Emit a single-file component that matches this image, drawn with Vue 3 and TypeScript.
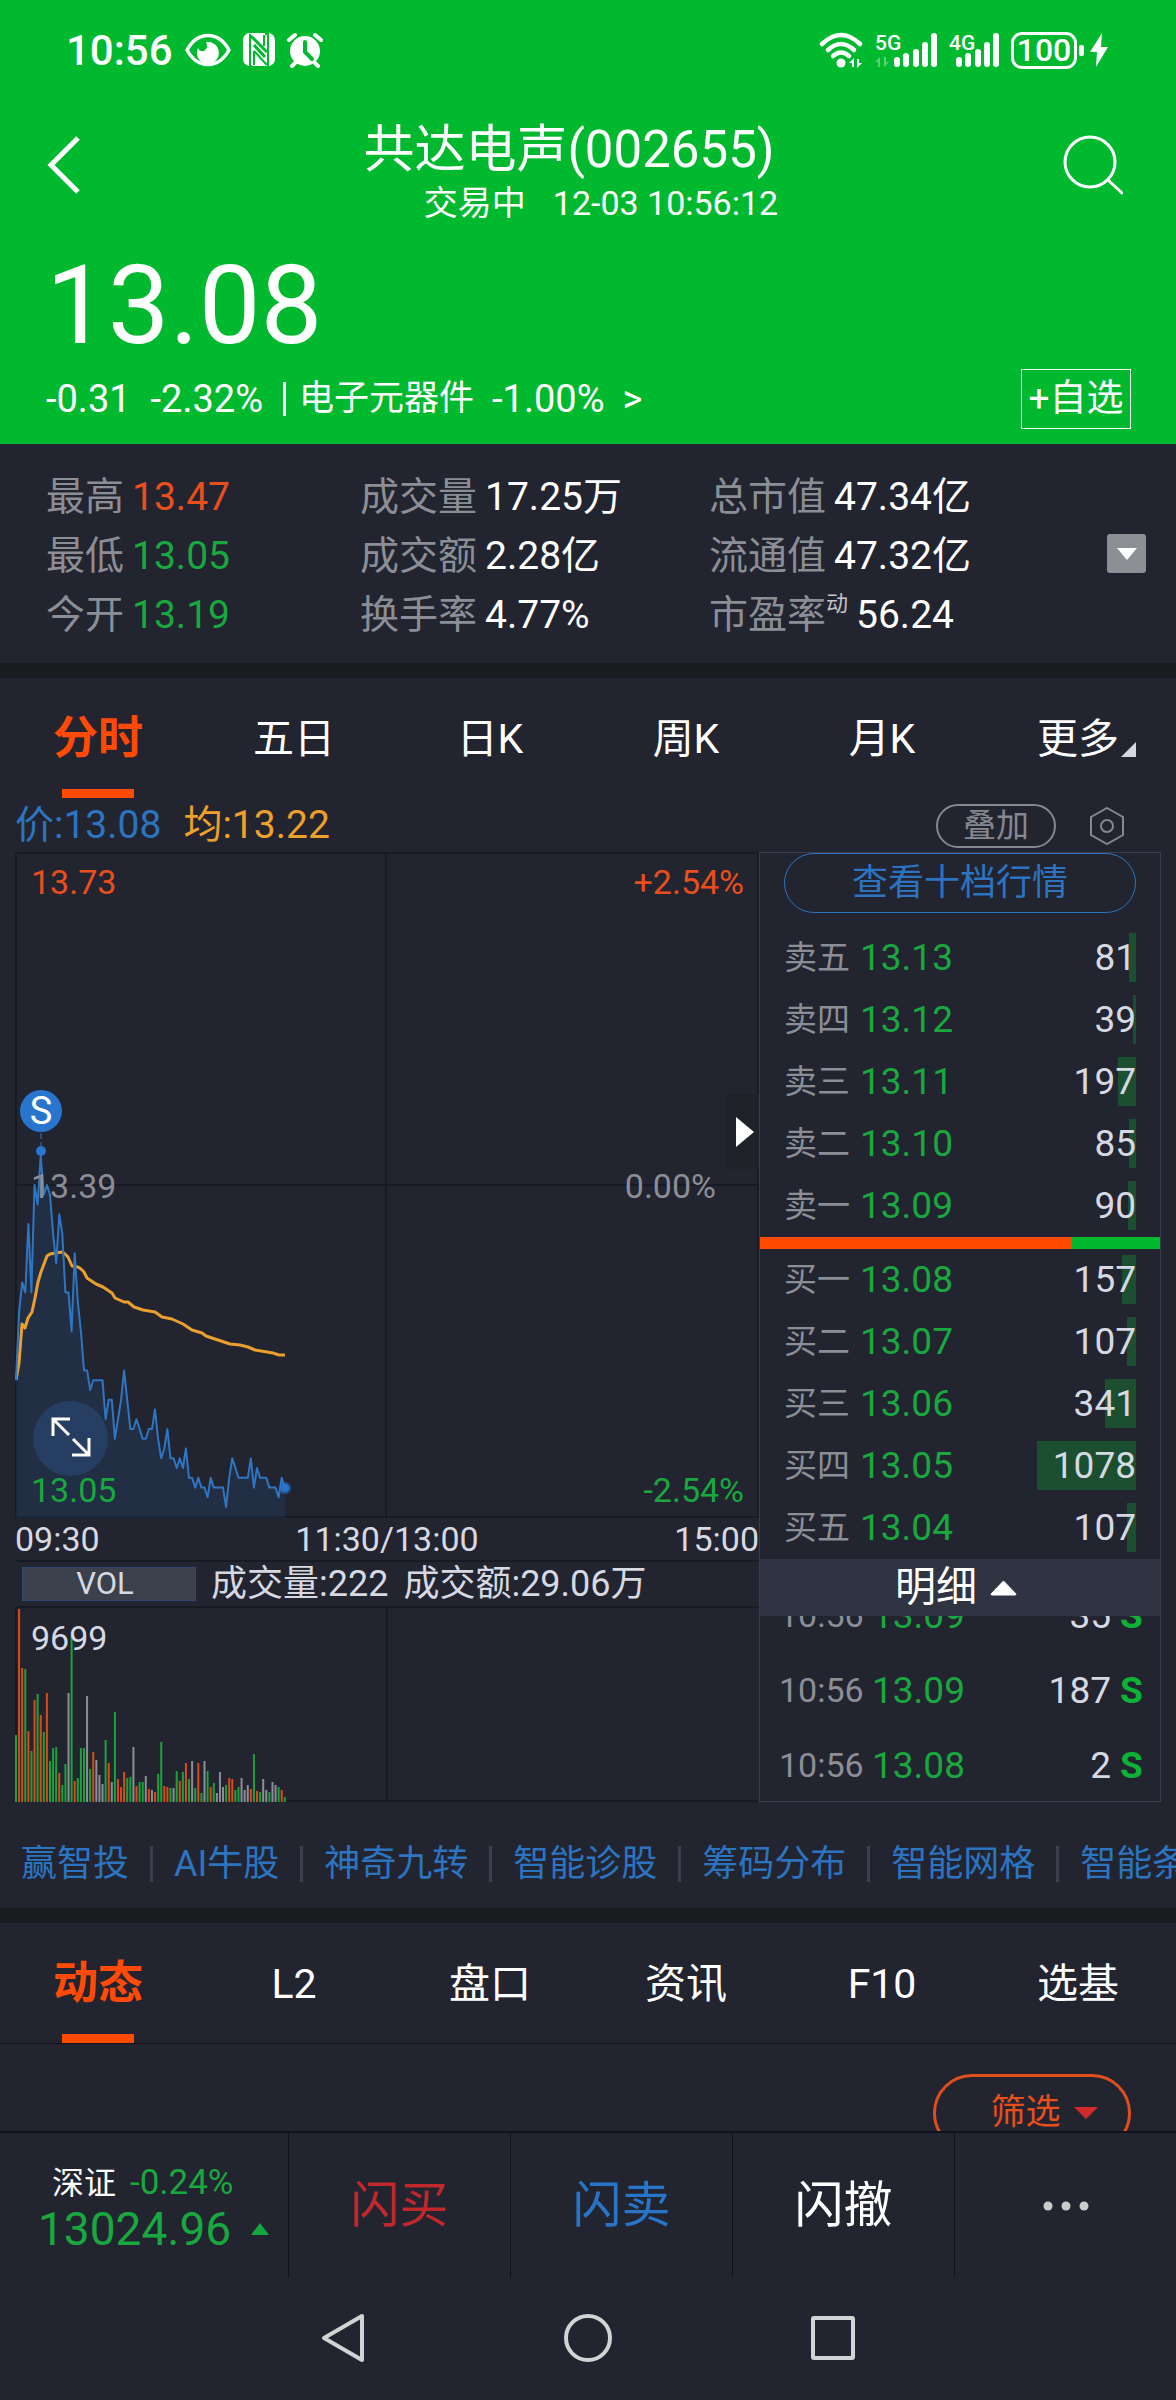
<script setup lang="ts">
import { computed, ref } from 'vue'

type Tone = 'up' | 'down' | 'flat' | 'plain'

interface Stat {
  label: string
  value: string
  tone: Tone
  mark?: string
}

interface Order {
  label: string
  price: string
  amount: number
  bar: number
}

const stats: Stat[] = [
  { label: '最高', value: '13.47', tone: 'up' },
  { label: '成交量', value: '17.25万', tone: 'plain' },
  { label: '总市值', value: '47.34亿', tone: 'plain' },
  { label: '最低', value: '13.05', tone: 'down' },
  { label: '成交额', value: '2.28亿', tone: 'plain' },
  { label: '流通值', value: '47.32亿', tone: 'plain' },
  { label: '今开', value: '13.19', tone: 'down' },
  { label: '换手率', value: '4.77%', tone: 'plain' },
  { label: '市盈率', value: '56.24', tone: 'plain', mark: '动' },
]

const periods = ['分时', '五日', '日K', '周K', '月K', '更多']
const period = ref('分时')

const sections = ['动态', 'L2', '盘口', '资讯', 'F10', '选基']
const section = ref('动态')

const tools = ['赢智投', 'AI牛股', '神奇九转', '智能诊股', '筹码分布', '智能网格', '智能条件单']

const asks: Order[] = [
  { label: '卖五', price: '13.13', amount: 81, bar: 7 },
  { label: '卖四', price: '13.12', amount: 39, bar: 3 },
  { label: '卖三', price: '13.11', amount: 197, bar: 18 },
  { label: '卖二', price: '13.10', amount: 85, bar: 7 },
  { label: '卖一', price: '13.09', amount: 90, bar: 8 },
]

const bids: Order[] = [
  { label: '买一', price: '13.08', amount: 157, bar: 14 },
  { label: '买二', price: '13.07', amount: 107, bar: 9 },
  { label: '买三', price: '13.06', amount: 341, bar: 31 },
  { label: '买四', price: '13.05', amount: 1078, bar: 99 },
  { label: '买五', price: '13.04', amount: 107, bar: 9 },
]

const trades = [
  { time: '10:56', price: '13.09', amount: 35, side: 'S' },
  { time: '10:56', price: '13.09', amount: 187, side: 'S' },
  { time: '10:56', price: '13.08', amount: 2, side: 'S' },
]

// Minute steps on the time axis, and ticks below yesterday's close for each minute.
const MINUTE = 3.09
const TICK = 9.76
const MIDDLE = 333
const ticks = [
  20, 13, 10, 11, 4, 11, 0, 2, -3, 1, 0, 1, 5, 8, 3, 5, 11, 11, 15, 7, 12, 15, 19, 19, 21, 20, 20, 20, 20,
  24, 22, 22, 26, 24, 22, 19, 22, 25, 25, 24, 25, 26, 26, 25, 25, 23, 26, 28, 27, 25, 28, 28, 29, 28, 29,
  27, 30, 30, 31, 30, 31, 31, 32, 30, 31, 31, 31, 31, 33, 30, 28, 29, 30, 30, 30, 30, 28, 31, 29, 30, 30,
  30, 31, 31, 31, 32, 30, 31,
]

const priceLine = computed(() =>
  ticks.map((t, i) => `${(1 + i * MINUTE).toFixed(1)},${(MIDDLE + t * TICK).toFixed(1)}`).join(' '),
)
const priceArea = computed(() => `1,666 ${priceLine.value} 270,666`)

const averageLine =
  '1,528 4,511 7,472 10,476 13,466 17,460 20,446 23,430 26,420 29,412 32,404 35,402 41,401 47,400 50,402 ' +
  '53,405 57,414 63,415 66,417 69,420 72,426 81,432 88,435 97,441 100,446 109,450 113,450 119,455 128,458 ' +
  '140,460 147,465 157,467 168,472 177,478 187,481 191,484 203,488 215,492 225,493 233,495 240,498 252,500 ' +
  '258,501 264,503 270,503'

const volumeData =
  'g67 r193 r134 g133 r71 g51 r102 g108 r87 g70 r109 g41 g54 g55 r29 g17 g38 w109 g166 r21 g24 g54 g54 w106 ' +
  'g33 r50 w42 w27 w18 g62 r39 w20 g90 r23 r15 r30 g24 g25 w55 r16 g20 g20 w26 r13 w12 r10 g28 g60 r16 r15 ' +
  'g14 w14 g31 r21 g30 r39 g23 w41 g14 r39 g9 w41 g31 r15 g19 w9 w30 w15 g17 r24 r23 g12 g15 w24 w12 w17 ' +
  'r13 g48 r11 g10 w23 w12 g10 w20 w17 g15 r12 g5'

const volumeColor: Record<string, string> = { g: '#18a33b', r: '#dc4a17', w: '#8b8e96' }
const volumes = volumeData.split(' ').map((entry, i) => ({
  x: i * MINUTE,
  height: Number(entry.slice(1)),
  color: volumeColor[entry[0]],
}))

const signalBars = [
  { x: 0, top: 24 },
  { x: 9, top: 20 },
  { x: 19, top: 16 },
  { x: 28, top: 9 },
  { x: 37, top: 0 },
]
</script>

<template>
  <div class="app">
    <header class="head">
      <div class="status">
        <div class="status-side">
          <span class="clock">10:56</span>
          <svg class="eye" width="46" height="34" viewBox="0 0 46 34" aria-hidden="true">
            <path d="M2 17Q10 2.500 23 2.500T44 17Q36 31.500 23 31.500T2 17Z" fill="none" stroke="#fff" stroke-width="3.500" stroke-linejoin="round" />
            <path d="M21 9A11 11 0 1 1 13 15Q15 19 19 18Q24 15 21 9Z" fill="#fff" />
          </svg>
          <svg width="32" height="34" viewBox="0 0 32 34" aria-hidden="true">
            <rect x="0" y="0" width="32" height="33" rx="7" fill="#fff" />
            <g fill="none" stroke="#00b92f" stroke-width="2">
              <path d="M7 1V33H9M25 33V1H22" />
              <path d="M8 3L24 19M11 12L22 24" stroke-width="3" />
              <path d="M11 18V32M11 18L24 32M21 2V13" />
            </g>
          </svg>
          <svg width="36" height="36" viewBox="0 0 36 36" aria-hidden="true">
            <circle cx="18" cy="19" r="15" fill="#fff" />
            <path d="M2 8L8 3M34 8L28 3M8 31L5 34M28 31L31 34" stroke="#fff" stroke-width="4" stroke-linecap="round" />
            <path d="M18 10V20L25 27" fill="none" stroke="#00b92f" stroke-width="4" stroke-linecap="round" />
          </svg>
        </div>
        <div class="status-side">
          <svg width="44" height="36" viewBox="0 0 44 36" aria-hidden="true">
            <g fill="none" stroke="#fff" stroke-width="4.500" stroke-linecap="round">
              <path d="M3 12Q22 -6 41 12" />
              <path d="M9 18Q22 6 35 18" />
              <path d="M14 24Q22 17 30 24" />
            </g>
            <circle cx="22" cy="31" r="4.500" fill="#fff" />
            <path d="M30 31L35 26V35H33V31ZM43 31L38 36V27H40V31Z" fill="#fff" />
          </svg>
          <svg width="62" height="36" viewBox="0 0 62 36" aria-label="5G">
            <text x="0" y="18" class="net">5G</text>
            <path d="M0 30L5 25V35H3V30ZM14 30L9 35V25H11V30Z" fill="#fff" opacity=".35" />
            <rect v-for="b in signalBars" :key="b.x" :x="b.x + 19" :y="b.top + 1" width="6" :height="34 - b.top" rx="3" fill="#fff" />
          </svg>
          <svg width="50" height="36" viewBox="0 0 50 36" aria-label="4G">
            <text x="0" y="18" class="net">4G</text>
            <rect v-for="b in signalBars" :key="b.x" :x="b.x + 7" :y="b.top + 1" width="6" :height="34 - b.top" rx="3" fill="#fff" />
          </svg>
          <div class="battery">
            <span class="cell">100</span>
            <span class="nub"></span>
            <svg width="18" height="34" viewBox="0 0 18 34" aria-hidden="true">
              <path d="M12 0L0 19H7L6 34L18 14H11Z" fill="#fff" />
            </svg>
          </div>
        </div>
      </div>

      <div class="title-row">
        <button class="icon-button" aria-label="返回">
          <svg width="34" height="58" viewBox="0 0 34 58">
            <path d="M31 2L4 29L31 56" fill="none" stroke="#fff" stroke-width="5" />
          </svg>
        </button>
        <div class="title">
          <h1>共达电声(002655)</h1>
          <p><span>交易中</span><span>12-03 10:56:12</span></p>
        </div>
        <button class="icon-button end" aria-label="搜索">
          <svg width="60" height="60" viewBox="0 0 60 60">
            <circle cx="27" cy="27" r="25" fill="none" stroke="#fff" stroke-width="3" />
            <path d="M45 45L59 58" stroke="#fff" stroke-width="3" stroke-linecap="round" />
          </svg>
        </button>
      </div>

      <div class="price">13.08</div>
      <div class="change">
        <span class="num">-0.31</span>
        <span class="num">-2.32%</span>
        <a href="#sector" class="sector"><i></i>电子元器件 <span class="num rate">-1.00%</span> <span class="num">&gt;</span></a>
        <button class="add">+自选</button>
      </div>
    </header>

    <section class="stats">
      <dl>
        <div v-for="s in stats" :key="s.label">
          <dt>{{ s.label }}<sup v-if="s.mark">{{ s.mark }}</sup></dt>
          <dd :class="s.tone">{{ s.value }}</dd>
        </div>
      </dl>
      <button class="expand" aria-label="展开">
        <svg width="20" height="12" viewBox="0 0 20 12"><path d="M0 0H20L10 12Z" fill="#fff" /></svg>
      </button>
    </section>

    <nav class="tabs">
      <button v-for="p in periods" :key="p" :class="{ active: p === period }" @click="period = p">
        <span>{{ p }}<svg v-if="p === '更多'" class="corner" width="15" height="15" viewBox="0 0 15 15"><path d="M15 0V15H0Z" fill="#d5d8df" /></svg></span>
      </button>
    </nav>

    <div class="legend">
      <span class="blue">价:13.08</span>
      <span class="amber">均:13.22</span>
      <button class="overlay">叠加</button>
      <button class="icon-button" aria-label="设置">
        <svg width="34" height="38" viewBox="0 0 34 38" fill="none" stroke="#85888f" stroke-width="2">
          <path d="M17 1L33 10V28L17 37L1 28V10Z" />
          <circle cx="17" cy="19" r="6" />
        </svg>
      </button>
    </div>

    <main class="board">
      <div class="charts">
        <div class="plot">
          <svg viewBox="0 0 744 666">
            <g stroke="#181a24" stroke-width="2" fill="none">
              <path d="M1 666V1H743V666" />
              <path d="M371 1V666M1 333H742M0 665H743" />
            </g>
            <polygon :points="priceArea" fill="#2775c8" fill-opacity=".13" />
            <polyline :points="averageLine" fill="none" stroke="#eba02d" stroke-width="3" stroke-linejoin="round" />
            <polyline :points="priceLine" fill="none" stroke="#2e76c2" stroke-width="2" stroke-linejoin="round" />
            <path d="M26 272V294" stroke="#2e76c2" stroke-dasharray="6 3" />
            <circle cx="26" cy="299" r="5" fill="#2775cc" />
            <circle cx="270" cy="636" r="6" fill="#2775cc" opacity=".55" />
            <circle cx="270" cy="636" r="4" fill="#2775cc" />
          </svg>
          <span class="mark top left up">13.73</span>
          <span class="mark top right up">+2.54%</span>
          <span class="mark middle left flat">13.39</span>
          <span class="mark middle right inner flat">0.00%</span>
          <span class="mark bottom left down">13.05</span>
          <span class="mark bottom right down">-2.54%</span>
          <span class="signal">S</span>
          <button class="zoom" aria-label="全屏">
            <svg width="40" height="40" viewBox="0 0 40 40" fill="none" stroke="#fff" stroke-width="3">
              <path d="M19 2H2V19M2 2L18 18M22 22L38 38M38 21V38H21" />
            </svg>
          </button>
          <button class="fold" aria-label="收起盘口">
            <svg width="18" height="30" viewBox="0 0 18 30"><path d="M0 0L18 15L0 30Z" fill="#fff" /></svg>
          </button>
        </div>
        <div class="hours"><span>09:30</span><span>11:30/13:00</span><span>15:00</span></div>
        <div class="vol-head">
          <button class="vol">VOL</button>
          <span>成交量:222</span>
          <span>成交额:29.06万</span>
        </div>
        <div class="plot">
          <svg viewBox="0 0 744 194">
            <path d="M1 0V193H743M372 0V193" stroke="#181a24" stroke-width="2" fill="none" />
            <rect v-for="v in volumes" :key="v.x" :x="v.x" :y="194 - v.height" width="2" :height="v.height" :fill="v.color" />
          </svg>
          <span class="mark volume">9699</span>
        </div>
      </div>

      <aside class="panel">
        <button class="depth">查看十档行情</button>
        <table class="orders">
          <tbody>
            <tr v-for="o in asks" :key="o.label">
              <th scope="row">{{ o.label }}</th>
              <td class="down">{{ o.price }}</td>
              <td class="amount"><i :style="{ width: o.bar + 'px' }"></i><span>{{ o.amount }}</span></td>
            </tr>
          </tbody>
        </table>
        <div class="balance"><i></i></div>
        <table class="orders">
          <tbody>
            <tr v-for="o in bids" :key="o.label">
              <th scope="row">{{ o.label }}</th>
              <td class="down">{{ o.price }}</td>
              <td class="amount"><i :style="{ width: o.bar + 'px' }"></i><span>{{ o.amount }}</span></td>
            </tr>
          </tbody>
        </table>
        <button class="detail">
          明细
          <svg width="27" height="16" viewBox="0 0 27 16"><path d="M13.500 1L26 14Q26 15 25 15H2Q1 15 1 14Z" fill="#fff" stroke="#fff" stroke-linejoin="round" /></svg>
        </button>
        <div class="trades">
          <table>
            <tbody>
              <tr v-for="(t, i) in trades" :key="i">
                <td class="time">{{ t.time }}</td>
                <td class="down">{{ t.price }}</td>
                <td class="amount">{{ t.amount }}</td>
                <td class="side">{{ t.side }}</td>
              </tr>
            </tbody>
          </table>
        </div>
      </aside>
    </main>

    <nav class="tools">
      <a v-for="t in tools" :key="t" href="#tool">{{ t }}</a>
    </nav>

    <nav class="tabs">
      <button v-for="s in sections" :key="s" :class="{ active: s === section }" @click="section = s">
        <span>{{ s }}</span>
      </button>
    </nav>

    <section class="feed">
      <button class="filter">
        筛选
        <svg width="24" height="12" viewBox="0 0 24 12"><path d="M0 0H24L12 12Z" fill="#d2292b" /></svg>
      </button>
    </section>

    <footer>
      <div class="actions">
        <a href="#index" class="index">
          <span class="index-name">深证 <b>-0.24%</b></span>
          <span class="index-value">13024.96<svg width="18" height="12" viewBox="0 0 18 12"><path d="M0 12L9 0L18 12Z" fill="#12a83c" /></svg></span>
        </a>
        <button class="buy">闪买</button>
        <button class="sell">闪卖</button>
        <button>闪撤</button>
        <button aria-label="更多操作">
          <svg width="46" height="10" viewBox="0 0 46 10" fill="#ccc"><circle cx="5" cy="5" r="4.500" /><circle cx="23" cy="5" r="4.500" /><circle cx="41" cy="5" r="4.500" /></svg>
        </button>
      </div>
      <div class="system">
        <button aria-label="后退">
          <svg width="48" height="50" viewBox="0 0 48 50"><path d="M43 3V47L5 25Z" fill="none" stroke="#d3d3d3" stroke-width="4" stroke-linejoin="round" /></svg>
        </button>
        <button aria-label="主页">
          <svg width="48" height="50" viewBox="0 0 48 50"><circle cx="24" cy="25" r="22" fill="none" stroke="#d3d3d3" stroke-width="4" /></svg>
        </button>
        <button aria-label="最近任务">
          <svg width="48" height="50" viewBox="0 0 48 50"><rect x="4" y="5" width="40" height="40" rx="1" fill="none" stroke="#d3d3d3" stroke-width="4" /></svg>
        </button>
      </div>
    </footer>
  </div>
</template>

<style>
body {
  margin: 0;
  background: #222430;
}
</style>

<style scoped>
.app {
  overflow: hidden;
  color: #fff;
  background: #222430;
  font-family: Roboto, "Noto Sans CJK SC", sans-serif;
  white-space: nowrap;
}
button {
  margin: 0;
  padding: 0;
  border: 0;
  background: none;
  color: inherit;
  font: inherit;
  cursor: pointer;
}
a {
  color: inherit;
  text-decoration: none;
}
svg {
  display: block;
}
table {
  width: 100%;
  border-collapse: collapse;
}
th,
td {
  padding: 0;
  font-weight: 400;
  text-align: left;
}
.up {
  color: #e94f1c;
}
.down {
  color: #18a83e;
}
.flat {
  color: #8b8e95;
}

/* Header */
.head {
  padding-bottom: 15px;
  background: #00b92f;
}
.status {
  display: flex;
  justify-content: space-between;
  align-items: center;
  height: 100px;
  padding: 0 68px 0 66px;
}
.status-side {
  display: flex;
  align-items: center;
  gap: 12px;
}
.clock {
  font-size: 42px;
  font-weight: 500;
}
.net {
  fill: #fff;
  font-size: 21px;
  font-weight: 500;
}
.battery {
  display: flex;
  align-items: center;
  gap: 2px;
}
.cell {
  box-sizing: border-box;
  width: 66px;
  border: 3px solid #fff;
  border-radius: 11px;
  font-size: 32px;
  font-weight: 500;
  line-height: 31px;
  text-align: center;
}
.nub {
  width: 5px;
  height: 11px;
  margin-right: 4px;
  border-radius: 2px;
  background: #fff;
}
.title-row {
  display: grid;
  grid-template-columns: 60px 1fr 92px;
  align-items: center;
  height: 130px;
  padding: 0 53px 0 47px;
}
.icon-button.end {
  justify-self: end;
}
.title {
  padding-top: 15px;
  text-align: center;
}
h1 {
  margin: 0;
  font-size: 51px;
  font-weight: 400;
  line-height: 60px;
}
.title p {
  display: flex;
  justify-content: center;
  gap: 27px;
  margin: 0;
  padding-left: 64px;
  font-size: 34px;
  line-height: 46px;
}
.price {
  margin: 20px 0 7px;
  padding-left: 46px;
  font-size: 110px;
  line-height: 112px;
}
.change {
  display: flex;
  align-items: center;
  gap: 20px;
  padding: 0 45px 0 46px;
  font-size: 35px;
  line-height: 60px;
}
.num {
  font-size: 38px;
}
.sector {
  display: flex;
  align-items: center;
  gap: 13px;
}
.rate {
  margin: 0 5px;
}
.sector i {
  width: 3px;
  height: 34px;
  background: #fff;
}
.add {
  box-sizing: border-box;
  width: 110px;
  margin-left: auto;
  border: 1px solid #fff;
  font-size: 37px;
  line-height: 58px;
}

/* Key figures */
.stats {
  display: flex;
  align-items: center;
  padding: 18px 30px 18px 46px;
  border-bottom: 15px solid #1b1c1f;
  font-size: 39px;
  line-height: 59px;
}
dl {
  display: grid;
  flex: 1;
  grid-template-columns: 314fr 349fr 398fr;
  margin: 0;
  padding-top: 6px;
}
dl div {
  display: flex;
  gap: 8px;
}
dt {
  color: #8b8e95;
}
sup {
  color: #c3c5ca;
  font-size: 22px;
  line-height: 0;
  vertical-align: 17px;
}
dd {
  margin: 0;
}
.expand {
  display: grid;
  place-items: center;
  width: 39px;
  height: 39px;
  border-radius: 3px;
  background: #8c9094;
}

/* Tab rows */
.tabs {
  display: grid;
  grid-template-columns: repeat(6, 1fr);
  font-size: 41px;
  line-height: 60px;
}
.tabs button {
  position: relative;
  padding: 31px 0 29px;
}
.tabs span {
  position: relative;
}
.tabs .active {
  color: #ff4a08;
  font-size: 45px;
  font-weight: 700;
}
.tabs .active::after {
  position: absolute;
  bottom: 0;
  left: calc(50% - 36px);
  width: 72px;
  height: 9px;
  background: #ff4a00;
  content: "";
}
.corner {
  position: absolute;
  right: -17px;
  bottom: 6px;
}

/* Chart legend */
.legend {
  display: flex;
  align-items: center;
  gap: 22px;
  padding: 1px 52px 0 15px;
  font-size: 39px;
  line-height: 53px;
}
.blue {
  color: #2c74c0;
}
.amber {
  color: #efa02a;
}
.overlay {
  box-sizing: border-box;
  width: 120px;
  margin: 0 12px 0 auto;
  border: 2px solid #85888f;
  border-radius: 22px;
  color: #85888f;
  font-size: 33px;
  line-height: 40px;
}

/* Chart and order book */
.board {
  display: grid;
  grid-template-columns: minmax(0, 744fr) minmax(0, 402fr);
  padding: 0 15px;
}
.plot {
  position: relative;
}
.plot > svg {
  width: 100%;
}
.mark {
  position: absolute;
  font-size: 34px;
  line-height: 40px;
}
.top {
  top: 10px;
}
.middle {
  top: calc(50% - 19px);
}
.bottom {
  bottom: 8px;
}
.left {
  left: 16px;
}
.mark.right {
  right: 15px;
}
.mark.inner {
  right: 43px;
}
.mark.volume {
  top: 10px;
  left: 16px;
  color: #d6d9e2;
}
.signal {
  position: absolute;
  top: 238px;
  left: 5px;
  width: 42px;
  border-radius: 50%;
  background: #2775cc;
  font-size: 38px;
  line-height: 42px;
  text-align: center;
}
.zoom {
  position: absolute;
  bottom: 42px;
  left: 18px;
  display: grid;
  place-items: center;
  width: 75px;
  height: 75px;
  padding-bottom: 3px;
  border-radius: 50%;
  background: #263e62;
}
.fold {
  position: absolute;
  top: 242px;
  right: 0;
  display: grid;
  place-items: center;
  width: 33px;
  height: 75px;
  padding-left: 5px;
  background: #1f2128;
}
.hours {
  display: flex;
  justify-content: space-between;
  color: #d6d9e2;
  font-size: 34px;
  line-height: 42px;
}
.vol-head {
  box-sizing: border-box;
  display: flex;
  align-items: center;
  gap: 15px;
  height: 48px;
  padding-left: 7px;
  border: solid #181a24;
  border-width: 2px 0;
  color: #d6d9e2;
  font-size: 36px;
  line-height: 44px;
}
.vol {
  box-sizing: border-box;
  width: 174px;
  padding-right: 8px;
  border: 1px solid #2f4a78;
  background: #3a414d;
  font-size: 31px;
  line-height: 32px;
}
.panel {
  display: flex;
  flex-direction: column;
  border: 1px solid #3a3d49;
  font-size: 37px;
}
.depth {
  margin: 0 24px 14px;
  border: 1px solid #2c74c0;
  border-radius: 30px;
  color: #2c74c0;
  font-size: 36px;
  line-height: 58px;
}
.orders {
  table-layout: fixed;
  line-height: 62px;
}
.orders th {
  box-sizing: border-box;
  width: 100px;
  padding-left: 24px;
  color: #8b8e95;
  font-size: 33px;
}
.amount {
  color: #d6d9e2;
  text-align: right;
}
.orders .amount {
  position: relative;
  padding-right: 24px;
}
.orders .amount i {
  position: absolute;
  top: 6px;
  right: 24px;
  height: 49px;
  background: #1b4f2f;
}
.orders .amount span {
  position: relative;
}
.balance {
  height: 12px;
  background: #00b92f;
}
.balance i {
  display: block;
  width: 78%;
  height: 100%;
  background: #ff4a00;
}
.detail {
  display: flex;
  align-items: center;
  justify-content: center;
  gap: 13px;
  padding-right: 8px;
  background: #303442;
  font-size: 41px;
  line-height: 57px;
}
.trades {
  display: flex;
  flex: 1 1 0;
  flex-direction: column;
  justify-content: flex-end;
  min-height: 0;
  overflow: hidden;
}
.trades table {
  flex: none;
  margin-bottom: -2px;
  line-height: 75px;
}
.trades .time {
  width: 93px;
  padding-left: 19px;
  color: #8b8e95;
  font-size: 34px;
}
.trades .side {
  box-sizing: border-box;
  width: 49px;
  padding-left: 9px;
  color: #0db236;
  font-weight: 700;
}

/* Shortcuts */
.tools {
  display: flex;
  padding: 44px 0 26px 21px;
  border-bottom: 15px solid #1b1c1f;
  color: #2c74c0;
  font-size: 36px;
  line-height: 36px;
}
.tools a + a {
  margin-left: 21px;
  padding-left: 21px;
  border-left: 3px solid #3b404c;
}
.feed {
  height: 57px;
  padding: 30px 45px 0 0;
  border-top: 1px solid #11131c;
  overflow: hidden;
}
.filter {
  display: flex;
  align-items: center;
  justify-content: center;
  gap: 13px;
  box-sizing: border-box;
  width: 198px;
  margin-left: auto;
  padding-left: 24px;
  border: 3px solid #e04e1c;
  border-radius: 39px;
  color: #e94f1c;
  font-size: 35px;
  line-height: 72px;
}

/* Bottom bars */
.actions {
  display: grid;
  grid-template-columns: 288fr repeat(4, 222fr);
  height: 145px;
  border-top: 2px solid #11131c;
  font-size: 49px;
  line-height: 60px;
}
.actions button {
  display: grid;
  place-items: center;
  border-left: 1px solid #11131c;
}
.index {
  padding: 28px 0 0 38px;
  color: #18a83e;
}
.index-name {
  display: block;
  padding-left: 14px;
  color: #fff;
  font-size: 32px;
  line-height: 44px;
}
.index-name b {
  margin-left: 6px;
  color: #18a83e;
  font-size: 35px;
  font-weight: 400;
}
.index-value {
  display: flex;
  align-items: center;
  gap: 20px;
  font-size: 46px;
  line-height: 48px;
}
.actions .buy {
  color: #c0282c;
}
.actions .sell {
  color: #2775c8;
}
.system {
  display: flex;
  align-items: center;
  justify-content: center;
  gap: 197px;
  height: 120px;
}
</style>
